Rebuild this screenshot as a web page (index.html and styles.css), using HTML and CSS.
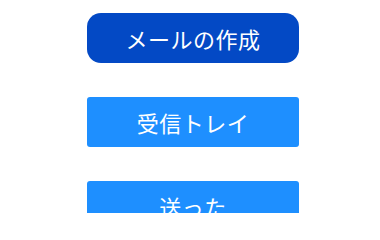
FILE: index.html
```html
<!DOCTYPE html>
<html lang="ja">
<head>
<meta charset="utf-8">
<link rel="stylesheet" href="styles.css">
</head>
<body>
<nav class="menu">
  <button class="btn btn-compose">メールの作成</button>
  <button class="btn btn-folder">受信トレイ</button>
  <button class="btn btn-folder">送った</button>
</nav>
</body>
</html>
```
FILE: styles.css
```css
html, body {
  margin: 0;
  padding: 0;
  background: #ffffff;
}
body {
  width: 380px;
  height: 213px;
  overflow: hidden;
}
.menu {
  display: flex;
  flex-direction: column;
  gap: 34px;
  padding: 13px 0 0 87px;
}
.btn {
  width: 212px;
  height: 50px;
  border: none;
  padding: 0;
  color: #ffffff;
  font-family: "Noto Sans CJK JP", "Noto Sans", sans-serif;
  font-weight: 400;
  font-size: 22px;
  letter-spacing: 0.5px;
  display: flex;
  align-items: center;
  justify-content: center;
}
.btn-compose {
  background: #0349c5;
  border-radius: 14px;
}
.btn-folder {
  background: #1e8fff;
  border-radius: 3px;
}
```
